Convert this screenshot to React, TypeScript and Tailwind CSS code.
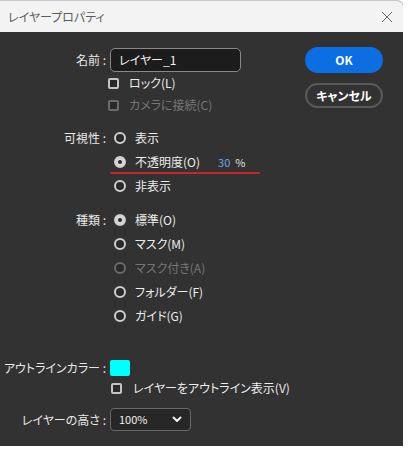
import React from "react";

const font = "[font-family:'Noto_Sans_CJK_JP','Noto_Sans',sans-serif] [font-feature-settings:'palt']";

function Radio({ checked, disabled }: { checked?: boolean; disabled?: boolean }) {
  const ring = disabled ? "border-[#6a6a6a]" : "border-[#cfcfcf]";
  return (
    <span
      className={`flex h-[12px] w-[12px] items-center justify-center rounded-full border-2 ${ring} ${
        checked ? "bg-[#d8d8d8]" : "bg-[#2a2a2a]"
      }`}
    >
      {checked && <span className="h-[4px] w-[4px] rounded-full bg-[#2a2a2a]" />}
    </span>
  );
}

function Check({ disabled }: { disabled?: boolean }) {
  return (
    <span
      className={`block h-[11px] w-[11px] rounded-[2px] border-2 bg-[#2a2a2a] ${
        disabled ? "border-[#6a6a6a]" : "border-[#c4c4c4]"
      }`}
    />
  );
}

function Label({ children }: { children: React.ReactNode }) {
  return <div className="w-[107px] shrink-0 pr-[1px] text-right text-[12px] text-[#e8e8e8]">{children}</div>;
}

function RadioRow({
  text,
  checked,
  disabled,
  label,
  children,
}: {
  text: string;
  checked?: boolean;
  disabled?: boolean;
  label?: string;
  children?: React.ReactNode;
}) {
  return (
    <div className="relative flex h-[24px] items-center">
      <Label>{label ?? ""}</Label>
      <div className="ml-[7px] flex items-center">
        <Radio checked={checked} disabled={disabled} />
        <span className={`ml-[9px] text-[12px] ${disabled ? "text-[#767676]" : "text-[#ececec]"}`}>{text}</span>
        {children}
      </div>
    </div>
  );
}

export default function App() {
  return (
    <div className={`h-[449px] w-[409px] bg-white ${font}`}>
      <div className="flex h-[446px] w-[403px] flex-col overflow-hidden rounded-tr-[6px] border-t border-[#c8c8c8] bg-[#323232]">
        <div className="flex h-[31px] shrink-0 items-center justify-between bg-[#f3f3f3] pl-[8px] pr-[10px]">
          <span className="text-[12px] text-[#5c5c5c]">レイヤープロパティ</span>
          <svg width="12" height="12" viewBox="0 0 12 12" className="text-[#6a6a6a]">
            <path d="M1 1 L11 11 M11 1 L1 11" stroke="currentColor" strokeWidth="1" fill="none" />
          </svg>
        </div>
        <div className="flex flex-1">
          <div className="w-[305px] shrink-0 pt-[16px]">
            <div className="flex h-[24px] items-center">
              <Label>名前 :</Label>
              <div className="ml-[3px] flex h-[24px] w-[131px] items-center rounded-[5px] border border-[#8a8a8a] bg-[#1c1c1c] pl-[8px] text-[12px] text-[#f2f2f2]">
                レイヤー_1
              </div>
            </div>
            <div className="flex h-[22px] items-center">
              <div className="w-[108px] shrink-0" />
              <Check />
              <span className="ml-[10px] text-[12px] text-[#ececec]">ロック(L)</span>
            </div>
            <div className="flex h-[22px] items-center">
              <div className="w-[108px] shrink-0" />
              <Check disabled />
              <span className="ml-[10px] text-[12px] text-[#767676]">カメラに接続(C)</span>
            </div>

            <div className="mt-[10px]">
              <RadioRow label="可視性 :" text="表示" />
              <RadioRow text="不透明度(O)" checked>
                <span className="ml-[18px] text-[11px] text-[#6fa8e4]">30</span>
                <span className="ml-[5px] text-[11px] text-[#e0e0e0]">%</span>
                <span className="absolute left-[110px] top-[22px] h-[2px] w-[150px] rounded-full bg-[#c8242c]" />
              </RadioRow>
              <RadioRow text="非表示" />
            </div>

            <div className="mt-[10px]">
              <RadioRow label="種類 :" text="標準(O)" checked />
              <RadioRow text="マスク(M)" />
              <RadioRow text="マスク付き(A)" disabled />
              <RadioRow text="フォルダー(F)" />
              <RadioRow text="ガイド(G)" />
            </div>

            <div className="mt-[30px] flex h-[20px] items-center">
              <Label>アウトラインカラー :</Label>
              <span className="ml-[3px] block h-[16px] w-[20px] rounded-[2px] bg-[#00ffff]" />
            </div>
            <div className="flex h-[20px] items-center">
              <div className="w-[111px] shrink-0" />
              <Check />
              <span className="ml-[11px] text-[12px] text-[#ececec]">レイヤーをアウトライン表示(V)</span>
            </div>
            <div className="mt-[10px] flex h-[23px] items-center">
              <Label>レイヤーの高さ :</Label>
              <div className="ml-[3px] flex h-[23px] w-[81px] items-center justify-between rounded-[4px] border border-[#686868] bg-[#272727] pl-[8px] pr-[8px] text-[11px] text-[#f0f0f0]">
                <span>100%</span>
                <svg width="10" height="7" viewBox="0 0 10 7">
                  <path d="M1.5 1.5 L5 5 L8.5 1.5" stroke="#f0f0f0" strokeWidth="2" fill="none" strokeLinecap="round" strokeLinejoin="round" />
                </svg>
              </div>
            </div>
          </div>
          <div className="flex flex-col pt-[15px]">
            <button className="flex h-[26px] w-[78px] items-center justify-center rounded-full bg-[#0b6fe3] text-[12px] font-bold text-white">
              OK
            </button>
            <button className="mt-[10px] flex h-[25px] w-[78px] items-center justify-center rounded-full border-2 border-[#5a5a5a] text-[12px] font-bold text-white">
              キャンセル
            </button>
          </div>
        </div>
      </div>
    </div>
  );
}
